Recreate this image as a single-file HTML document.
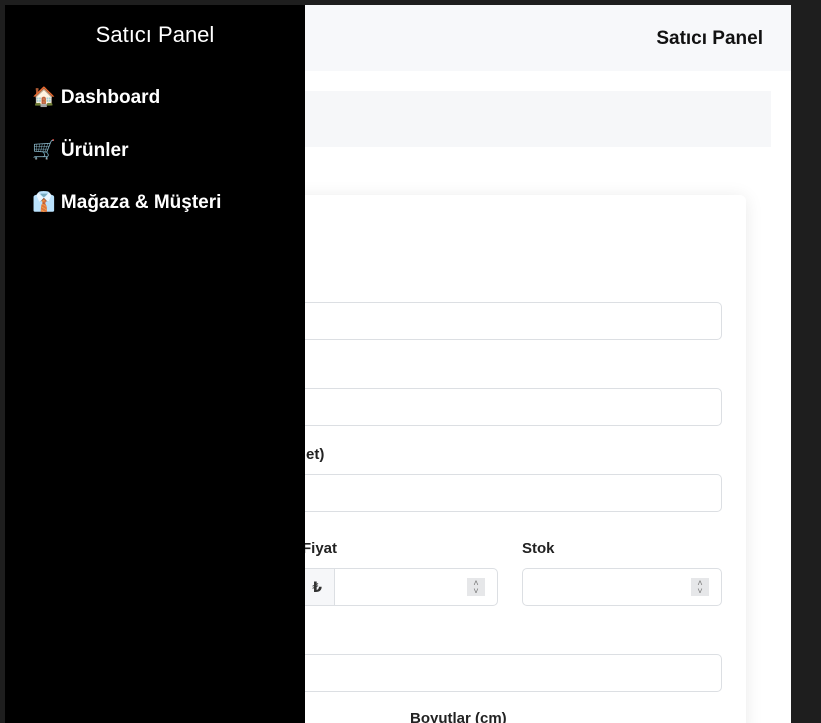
<!DOCTYPE html>
<html><head><meta charset="utf-8"><style>
*{box-sizing:border-box;margin:0;padding:0}
html,body{width:821px;height:723px;overflow:hidden}
body{background:#1e1e1e;position:relative;font-family:"Liberation Sans","DejaVu Sans",sans-serif}
.page{position:absolute;left:5px;top:5px;width:786px;height:718px;background:#fff;overflow:hidden}
.hdr{position:absolute;left:0;top:0;width:786px;height:66px;background:#f7f8fa}
.hdr span{position:absolute;right:28px;top:23px;font-weight:bold;font-size:19px;color:#111}
.crumb{position:absolute;left:0;top:86px;width:766px;height:56px;background:#f6f7f9}
.card{position:absolute;left:0;top:190px;width:741px;height:540px;background:#fff;border-radius:6px;box-shadow:0 2px 18px rgba(0,0,0,.09)}
.in{position:absolute;border:1px solid #dcdfe3;border-radius:5px;background:#fff;height:38px}
.lbl{position:absolute;font-weight:bold;font-size:15px;color:#222;white-space:nowrap}
.spin{position:absolute;width:18px;height:18px;background:#e6e7e9;top:9px;font-size:9px;color:#777;text-align:center;line-height:8px;padding-top:1px}
.side{position:absolute;left:5px;top:5px;width:300px;height:718px;background:#000;color:#fff}
.side h1{font-weight:normal;font-size:22px;text-align:center;margin-top:17px}
.side a{position:absolute;left:27px;font-weight:bold;font-size:19px;color:#fff}
</style></head><body>
<div class="page">
 <div class="hdr"><span>Satıcı Panel</span></div>
 <div class="crumb"></div>
 <div class="card"></div>
 <div class="in" style="left:280px;top:297px;width:437px"></div>
 <div class="in" style="left:280px;top:383px;width:437px"></div>
 <div class="lbl" style="left:276px;top:441px">(Adet)</div>
 <div class="in" style="left:280px;top:469px;width:437px"></div>
 <div class="lbl" style="left:297px;top:535px">Fiyat</div>
 <div class="lbl" style="left:517px;top:535px">Stok</div>
 <div class="in" style="left:280px;top:563px;width:213px"><div style="position:absolute;left:0;top:0;width:49px;height:36px;background:#f6f7f9;border-right:1px solid #dcdfe3;font-size:14px;font-weight:bold;line-height:36px;text-align:right;padding-right:12px;color:#333">₺</div><div class="spin" style="right:12px">˄<br>˅</div></div>
 <div class="in" style="left:517px;top:563px;width:200px"><div class="spin" style="right:12px">˄<br>˅</div></div>
 <div class="in" style="left:280px;top:649px;width:437px"></div>
 <div class="lbl" style="left:405px;top:705px">Boyutlar (cm)</div>
</div>
<div class="side">
 <h1>Satıcı Panel</h1>
 <a style="top:80px">🏠 Dashboard</a>
 <a style="top:133px">🛒 Ürünler</a>
 <a style="top:185px">👔 Mağaza &amp; Müşteri</a>
</div>
</body></html>
